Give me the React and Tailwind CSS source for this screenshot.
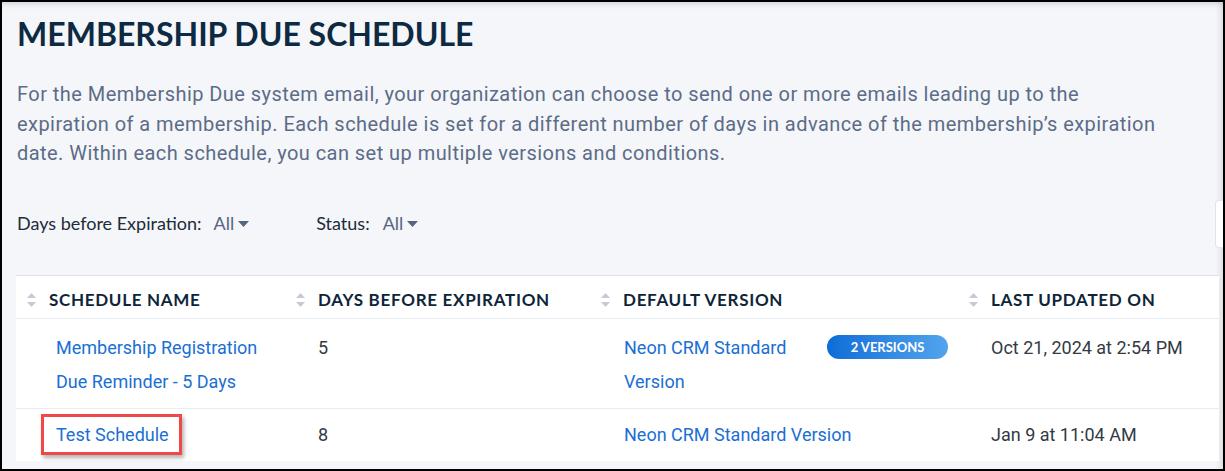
import React from 'react';

const SortIcon = () => (
    <svg width="9" height="14" viewBox="0 0 9 14" className="shrink-0">
        <path d="M4.5 0 L9 5 L0 5 Z" fill="#c5cad3" />
        <path d="M0 9 L9 9 L4.5 14 Z" fill="#c5cad3" />
    </svg>
);

const Caret = () => (
    <svg width="11" height="6" viewBox="0 0 11 6" className="ml-[4px]">
        <path d="M0 0 L11 0 L5.5 6 Z" fill="#56657f" />
    </svg>
);

const headers = ['Schedule Name', 'Days before Expiration', 'Default Version', 'Last Updated On'];

const App = () => {
    return (
        <div className="w-[1225px] h-[471px] border-2 border-black bg-[#f4f6f9] overflow-hidden">
            <div className="h-full shadow-[inset_0_7px_7px_-6px_rgba(0,0,0,0.18),inset_-8px_0_7px_-6px_rgba(0,0,0,0.12)]">
                <div className="pl-[15px] pt-[13px]">
                    <h1 className="font-['Lato',sans-serif] font-bold text-[32px] leading-[38px] tracking-[0px] text-[#0d2a42] uppercase">
                        Membership Due Schedule
                    </h1>
                    <p className="mt-[27px] font-['Roboto',sans-serif] text-[20px] leading-[29.5px] tracking-[0.45px] text-[#5c6c88] whitespace-nowrap">
                        For the Membership Due system email, your organization can choose to send one or more emails leading up to the
                        <br />
                        expiration of a membership. Each schedule is set for a different number of days in advance of the membership’s expiration
                        <br />
                        date. Within each schedule, you can set up multiple versions and conditions.
                    </p>
                </div>

                <div className="mt-[31px] pl-[15px] flex items-center font-['Lato',sans-serif] text-[18px] h-[48px]">
                    <span className="text-[#1d2b3a]">Days before Expiration:</span>
                    <span className="ml-[12px] text-[#56657f] flex items-center">All<Caret /></span>
                    <span className="ml-[67px] text-[#1d2b3a]">Status:</span>
                    <span className="ml-[13px] text-[#56657f] flex items-center">All<Caret /></span>
                    <div className="ml-auto w-[8px] h-[48px] bg-white border border-r-0 border-[#dfe3ea] rounded-l-[4px]"></div>
                </div>

                <div className="mt-[27px] ml-[14px] w-[1203px] bg-white border-t border-[#dde1ea]">
                    <div className="grid grid-cols-[269px_305px_368px_1fr] h-[43px] pt-[7px] border-b border-[#e8ebf2] items-center font-['Lato',sans-serif] font-bold text-[17px] tracking-[0.7px] text-[#0e2539] uppercase">
                        {headers.map((h) => (
                            <div key={h} className="flex items-center pl-[11px] gap-[13px]">
                                <SortIcon />
                                <span>{h}</span>
                            </div>
                        ))}
                    </div>

                    <div className="grid grid-cols-[269px_305px_368px_1fr] border-b border-[#e8ebf2] font-['Roboto',sans-serif] text-[18px] leading-[34px] pt-[12px] pb-[9px]">
                        <div className="pl-[40px] pr-[4px] text-[#1a6fd4]">Membership Registration Due Reminder - 5 Days</div>
                        <div className="pl-[33px] text-[#333a44]">5</div>
                        <div className="pl-[34px] pr-[10px] flex items-start justify-between gap-[12px]">
                            <span className="text-[#1a6fd4]">Neon CRM Standard Version</span>
                            <span className="mt-[4px] shrink-0 w-[121px] h-[24px] rounded-full bg-gradient-to-r from-[#0a6dd6] to-[#52a4ec] text-white font-['Lato',sans-serif] font-bold text-[13px] leading-[24px] text-center uppercase">
                                2 Versions
                            </span>
                        </div>
                        <div className="pl-[33px] text-[#333a44]">Oct 21, 2024 at 2:54 PM</div>
                    </div>

                    <div className="grid grid-cols-[269px_305px_368px_1fr] font-['Roboto',sans-serif] text-[18px] leading-[34px] pt-[9px] pb-[9px]">
                        <div className="pl-[40px]">
                            <span className="relative text-[#1a6fd4]">
                                Test Schedule
                                <span className="absolute left-[-15px] right-[-13px] top-[-10px] bottom-[-10px] border-[3px] border-[#f04848] shadow-[2px_3px_4px_rgba(0,0,0,0.3)]"></span>
                            </span>
                        </div>
                        <div className="pl-[33px] text-[#333a44]">8</div>
                        <div className="pl-[34px] text-[#1a6fd4]">Neon CRM Standard Version</div>
                        <div className="pl-[33px] text-[#333a44]">Jan 9 at 11:04 AM</div>
                    </div>
                </div>
            </div>
        </div>
    );
};

export default App;
